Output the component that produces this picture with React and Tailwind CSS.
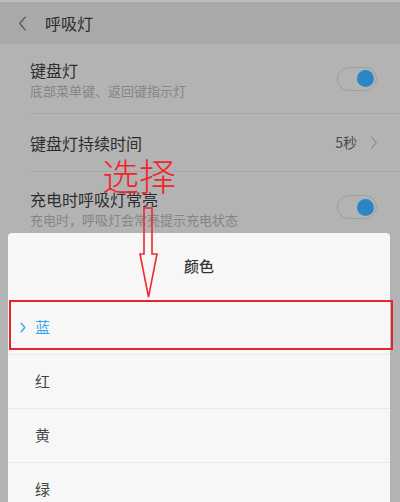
import React from 'react';

const font = { fontFamily: '"Noto Sans CJK SC", "Noto Sans", sans-serif' };

function Toggle() {
    return (
        <div className="w-[40px] h-[24px] rounded-full border border-[#9f9f9f] bg-[#b3b3b3] flex items-center justify-end pr-[2px]">
            <div className="w-[17px] h-[17px] rounded-full bg-[#2a86c6]" />
        </div>
    );
}

function Chevron({ className, left = false, width = 1.4 }) {
    return (
        <svg viewBox="0 0 10 16" className={className} fill="none" stroke="currentColor" strokeWidth={width} strokeLinecap="round" strokeLinejoin="round">
            {left ? <path d="M8 1 L2 8 L8 15" /> : <path d="M2 1 L8 8 L2 15" />}
        </svg>
    );
}

const colors = ['红', '黄', '绿'];

export default function App() {
    return (
        <div className="relative w-[400px] h-[502px] overflow-hidden bg-[#b3b3b3]" style={font}>
            {/* header */}
            <div className="h-[44px] bg-[#a9a9a9] border-t-2 border-[#bdbdbd] flex items-center">
                <Chevron left className="w-[9px] h-[15px] ml-[18px] text-[#555]" />
                <span className="ml-[18px] text-[16px] text-[#2c2c2c]">呼吸灯</span>
            </div>

            {/* settings list */}
            <div className="pl-[30px]">
                <div className="h-[70px] flex items-center justify-between pr-[23px] border-b border-[#a6a6a6]">
                    <div className="flex flex-col pt-[2px]">
                        <span className="text-[16px] leading-[20px] text-[#2e2e2e]">键盘灯</span>
                        <span className="text-[13px] leading-[18px] mt-[2px] text-[#858585]">底部菜单键、返回键指示灯</span>
                    </div>
                    <Toggle />
                </div>
                <div className="h-[58px] flex items-center justify-between pr-[22px] border-b border-[#a6a6a6]">
                    <span className="text-[16px] text-[#2e2e2e]">键盘灯持续时间</span>
                    <div className="flex items-center gap-[13px]">
                        <span className="text-[14px] text-[#4a4a4a]">5秒</span>
                        <Chevron className="w-[8px] h-[15px] text-[#7a7a7a]" width={1.2} />
                    </div>
                </div>
                <div className="h-[60px] flex items-start justify-between pr-[23px] pt-[17px]">
                    <div className="flex flex-col">
                        <span className="text-[16px] leading-[20px] text-[#2e2e2e]">充电时呼吸灯常亮</span>
                        <span className="text-[13px] leading-[18px] mt-[2px] text-[#858585]">充电时，呼吸灯会常亮提示充电状态</span>
                    </div>
                    <div className="mt-[6px]">
                        <Toggle />
                    </div>
                </div>
            </div>

            {/* bottom sheet */}
            <div className="absolute left-[8px] w-[382px] top-[233px] bottom-0 bg-[#f7f7f7] rounded-t-[4px]">
                <div className="h-[67px] flex items-center justify-center">
                    <span className="text-[15px] font-medium text-[#333]">颜色</span>
                </div>
                <div className="h-[54px] flex items-center pl-[12px] text-[#3aa6f0]">
                    <Chevron className="w-[6px] h-[11px]" width={2.2} />
                    <span className="ml-[9px] text-[15px]">蓝</span>
                </div>
                {colors.map((c) => (
                    <div key={c} className="h-[54px] flex items-center pl-[27px] border-t border-[#e9e9e9]">
                        <span className="text-[15px] text-[#444]">{c}</span>
                    </div>
                ))}
            </div>

            {/* annotation */}
            <div className="absolute left-[9px] top-[300px] w-[384px] h-[50px] border-2 border-[#e8242b]" />
            <div className="absolute left-[102px] top-[156px] text-[37px] leading-[38px] font-light text-[#f0262c]">选择</div>
            <svg className="absolute left-[138px] top-[206px]" width="22" height="94" viewBox="0 0 22 94" fill="none" stroke="#ee2a2e" strokeWidth="1.6">
                <path d="M6 2 L14 2 L14 48 L19 48 L10.5 91 L2 48 L6 48 Z" />
            </svg>
        </div>
    );
}
